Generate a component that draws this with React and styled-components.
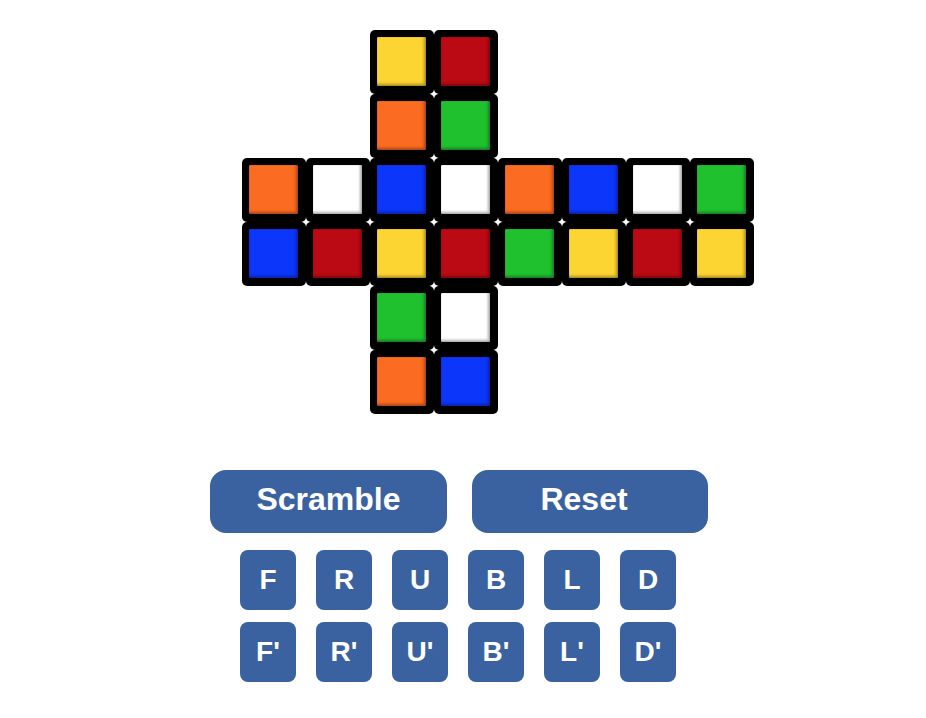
import styled, { createGlobalStyle } from "styled-components";

const GlobalStyle = createGlobalStyle`
  html, body {
    margin: 0;
    padding: 0;
    background: #ffffff;
  }
  body {
    font-family: "Liberation Sans", Arial, Helvetica, sans-serif;
  }
`;

const COLORS = {
  Y: "#fdd533",
  R: "#bb0a14",
  O: "#fb6b21",
  G: "#1fc12f",
  B: "#0c36fa",
  W: "#ffffff",
};

// [row, column, colour] on an 8 x 6 grid of facelets
const FACELETS = [
  [1, 3, "Y"], [1, 4, "R"],
  [2, 3, "O"], [2, 4, "G"],
  ..."OWBWOBWG".split("").map((c, i) => [3, i + 1, c]),
  ..."BRYRGYRY".split("").map((c, i) => [4, i + 1, c]),
  [5, 3, "G"], [5, 4, "W"],
  [6, 3, "O"], [6, 4, "B"],
];

const MOVES = [
  ["F", "R", "U", "B", "L", "D"],
  ["F'", "R'", "U'", "B'", "L'", "D'"],
];

const Page = styled.div`
  width: 918px;
  display: flex;
  flex-direction: column;
  align-items: center;
  padding-top: 30px;
`;

const Net = styled.div`
  align-self: flex-start;
  margin-left: 242px;
  display: grid;
  grid-template-columns: repeat(8, 64px);
  grid-template-rows: repeat(6, 64px);
`;

const Cell = styled.div`
  grid-row: ${({ $row }) => $row};
  grid-column: ${({ $col }) => $col};
  box-sizing: border-box;
  width: 64px;
  height: 64px;
  padding: 7px 8px 8px 7px;
  background: #000;
  border-radius: 5px;
`;

const Sticker = styled.div`
  width: 100%;
  height: 100%;
  border-radius: 1px;
  background: ${({ $color }) => $color};
  box-shadow: inset -2px -2px 3px rgba(0, 0, 0, 0.32),
    inset 0 0 1px rgba(0, 0, 0, 0.4);
`;

const MainRow = styled.div`
  display: flex;
  gap: 25px;
  margin-top: 56px;
`;

const BigButton = styled.button`
  width: ${({ $width }) => $width}px;
  height: 63px;
  border: none;
  border-radius: 16px;
  background: #3b62a0;
  color: #fff;
  font-family: "Liberation Sans", Arial, sans-serif;
  font-weight: bold;
  font-size: 32px;
  padding: 0 ${({ $shift }) => $shift || 0}px 4px 0;
  cursor: pointer;
`;

const MoveGrid = styled.div`
  display: grid;
  grid-template-columns: repeat(6, 56px);
  grid-auto-rows: 60px;
  column-gap: 20px;
  row-gap: 12px;
  margin: 17px 2px 0 0;
`;

const MoveButton = styled.button`
  border: none;
  border-radius: 8px;
  background: #3b62a0;
  color: #fff;
  font-family: "Liberation Sans", Arial, sans-serif;
  font-weight: bold;
  font-size: 28px;
  padding: 0;
  cursor: pointer;
`;

export default function App() {
  return (
    <>
      <GlobalStyle />
      <Page>
        <Net>
          {FACELETS.map(([row, col, c]) => (
            <Cell key={`${row}-${col}`} $row={row} $col={col}>
              <Sticker $color={COLORS[c]} />
            </Cell>
          ))}
        </Net>
        <MainRow>
          <BigButton $width={237}>Scramble</BigButton>
          <BigButton $width={236} $shift={12}>Reset</BigButton>
        </MainRow>
        <MoveGrid>
          {MOVES.flat().map((m) => (
            <MoveButton key={m}>{m}</MoveButton>
          ))}
        </MoveGrid>
      </Page>
    </>
  );
}
